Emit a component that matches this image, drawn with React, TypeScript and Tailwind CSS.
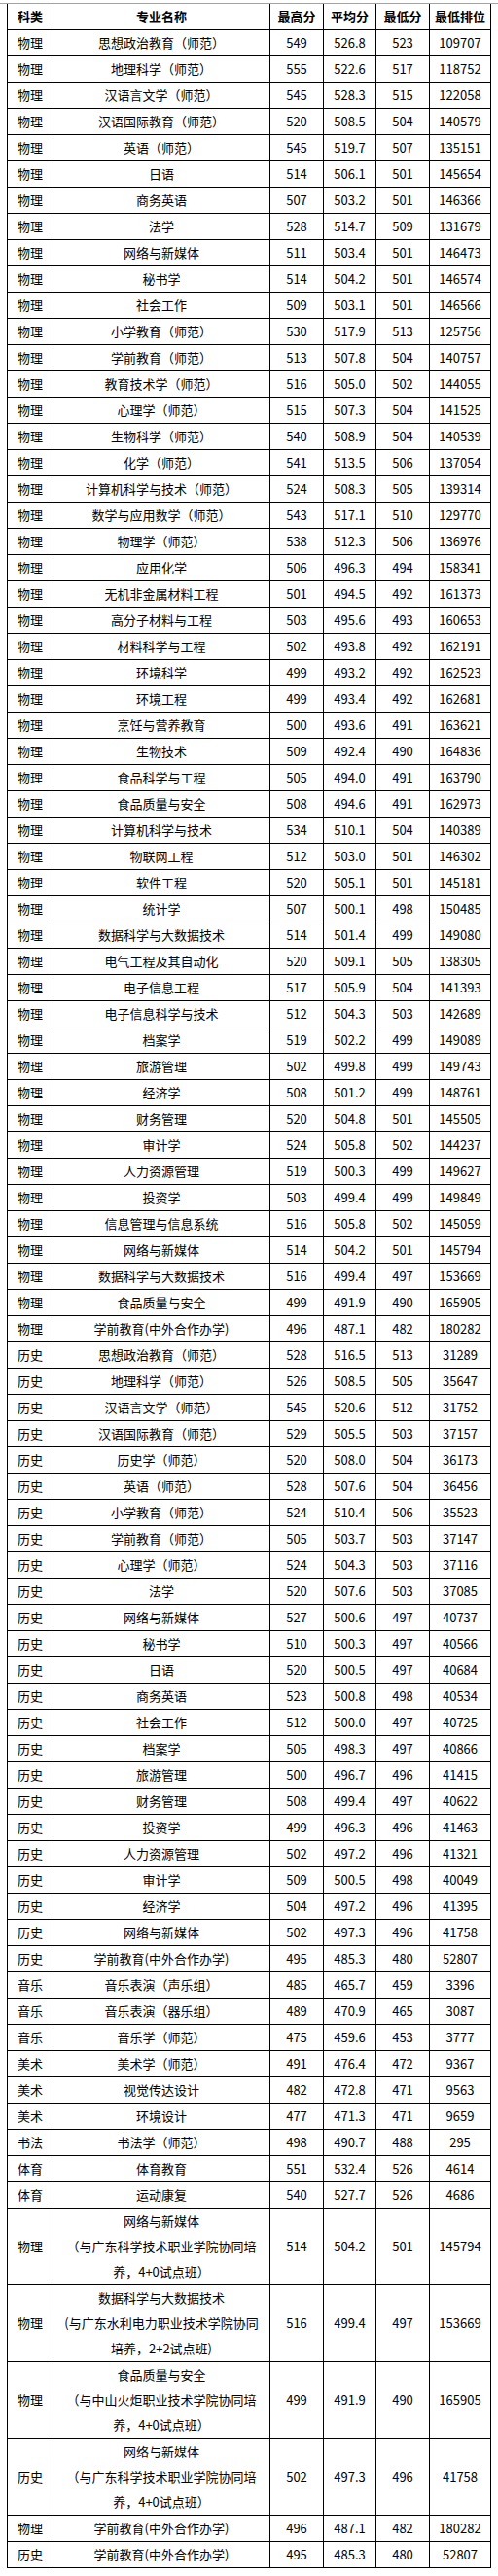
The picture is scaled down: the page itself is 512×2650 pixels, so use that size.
type Row = [string, string[], string, string, string, string];

const single = (s: string) => [s];

const physics: [string, string, string, string, string][] = [
  ["思想政治教育（师范）", "549", "526.8", "523", "109707"],
  ["地理科学（师范）", "555", "522.6", "517", "118752"],
  ["汉语言文学（师范）", "545", "528.3", "515", "122058"],
  ["汉语国际教育（师范）", "520", "508.5", "504", "140579"],
  ["英语（师范）", "545", "519.7", "507", "135151"],
  ["日语", "514", "506.1", "501", "145654"],
  ["商务英语", "507", "503.2", "501", "146366"],
  ["法学", "528", "514.7", "509", "131679"],
  ["网络与新媒体", "511", "503.4", "501", "146473"],
  ["秘书学", "514", "504.2", "501", "146574"],
  ["社会工作", "509", "503.1", "501", "146566"],
  ["小学教育（师范）", "530", "517.9", "513", "125756"],
  ["学前教育（师范）", "513", "507.8", "504", "140757"],
  ["教育技术学（师范）", "516", "505.0", "502", "144055"],
  ["心理学（师范）", "515", "507.3", "504", "141525"],
  ["生物科学（师范）", "540", "508.9", "504", "140539"],
  ["化学（师范）", "541", "513.5", "506", "137054"],
  ["计算机科学与技术（师范）", "524", "508.3", "505", "139314"],
  ["数学与应用数学（师范）", "543", "517.1", "510", "129770"],
  ["物理学（师范）", "538", "512.3", "506", "136976"],
  ["应用化学", "506", "496.3", "494", "158341"],
  ["无机非金属材料工程", "501", "494.5", "492", "161373"],
  ["高分子材料与工程", "503", "495.6", "493", "160653"],
  ["材料科学与工程", "502", "493.8", "492", "162191"],
  ["环境科学", "499", "493.2", "492", "162523"],
  ["环境工程", "499", "493.4", "492", "162681"],
  ["烹饪与营养教育", "500", "493.6", "491", "163621"],
  ["生物技术", "509", "492.4", "490", "164836"],
  ["食品科学与工程", "505", "494.0", "491", "163790"],
  ["食品质量与安全", "508", "494.6", "491", "162973"],
  ["计算机科学与技术", "534", "510.1", "504", "140389"],
  ["物联网工程", "512", "503.0", "501", "146302"],
  ["软件工程", "520", "505.1", "501", "145181"],
  ["统计学", "507", "500.1", "498", "150485"],
  ["数据科学与大数据技术", "514", "501.4", "499", "149080"],
  ["电气工程及其自动化", "520", "509.1", "505", "138305"],
  ["电子信息工程", "517", "505.9", "504", "141393"],
  ["电子信息科学与技术", "512", "504.3", "503", "142689"],
  ["档案学", "519", "502.2", "499", "149089"],
  ["旅游管理", "502", "499.8", "499", "149743"],
  ["经济学", "508", "501.2", "499", "148761"],
  ["财务管理", "520", "504.8", "501", "145505"],
  ["审计学", "524", "505.8", "502", "144237"],
  ["人力资源管理", "519", "500.3", "499", "149627"],
  ["投资学", "503", "499.4", "499", "149849"],
  ["信息管理与信息系统", "516", "505.8", "502", "145059"],
  ["网络与新媒体", "514", "504.2", "501", "145794"],
  ["数据科学与大数据技术", "516", "499.4", "497", "153669"],
  ["食品质量与安全", "499", "491.9", "490", "165905"],
  ["学前教育(中外合作办学)", "496", "487.1", "482", "180282"],
];

const history: [string, string, string, string, string][] = [
  ["思想政治教育（师范）", "528", "516.5", "513", "31289"],
  ["地理科学（师范）", "526", "508.5", "505", "35647"],
  ["汉语言文学（师范）", "545", "520.6", "512", "31752"],
  ["汉语国际教育（师范）", "529", "505.5", "503", "37157"],
  ["历史学（师范）", "520", "508.0", "504", "36173"],
  ["英语（师范）", "528", "507.6", "504", "36456"],
  ["小学教育（师范）", "524", "510.4", "506", "35523"],
  ["学前教育（师范）", "505", "503.7", "503", "37147"],
  ["心理学（师范）", "524", "504.3", "503", "37116"],
  ["法学", "520", "507.6", "503", "37085"],
  ["网络与新媒体", "527", "500.6", "497", "40737"],
  ["秘书学", "510", "500.3", "497", "40566"],
  ["日语", "520", "500.5", "497", "40684"],
  ["商务英语", "523", "500.8", "498", "40534"],
  ["社会工作", "512", "500.0", "497", "40725"],
  ["档案学", "505", "498.3", "497", "40866"],
  ["旅游管理", "500", "496.7", "496", "41415"],
  ["财务管理", "508", "499.4", "497", "40622"],
  ["投资学", "499", "496.3", "496", "41463"],
  ["人力资源管理", "502", "497.2", "496", "41321"],
  ["审计学", "509", "500.5", "498", "40049"],
  ["经济学", "504", "497.2", "496", "41395"],
  ["网络与新媒体", "502", "497.3", "496", "41758"],
  ["学前教育(中外合作办学)", "495", "485.3", "480", "52807"],
];

const rows: Row[] = [
  ...physics.map(([n, a, b, c, d]): Row => ["物理", single(n), a, b, c, d]),
  ...history.map(([n, a, b, c, d]): Row => ["历史", single(n), a, b, c, d]),
  ["音乐", single("音乐表演（声乐组）"), "485", "465.7", "459", "3396"],
  ["音乐", single("音乐表演（器乐组）"), "489", "470.9", "465", "3087"],
  ["音乐", single("音乐学（师范）"), "475", "459.6", "453", "3777"],
  ["美术", single("美术学（师范）"), "491", "476.4", "472", "9367"],
  ["美术", single("视觉传达设计"), "482", "472.8", "471", "9563"],
  ["美术", single("环境设计"), "477", "471.3", "471", "9659"],
  ["书法", single("书法学（师范）"), "498", "490.7", "488", "295"],
  ["体育", single("体育教育"), "551", "532.4", "526", "4614"],
  ["体育", single("运动康复"), "540", "527.7", "526", "4686"],
  ["物理", ["网络与新媒体", "（与广东科学技术职业学院协同培", "养，4+0试点班）"], "514", "504.2", "501", "145794"],
  ["物理", ["数据科学与大数据技术", "(与广东水利电力职业技术学院协同", "培养，2+2试点班)"], "516", "499.4", "497", "153669"],
  ["物理", ["食品质量与安全", "（与中山火炬职业技术学院协同培", "养，4+0试点班）"], "499", "491.9", "490", "165905"],
  ["历史", ["网络与新媒体", "（与广东科学技术职业学院协同培", "养，4+0试点班）"], "502", "497.3", "496", "41758"],
  ["物理", single("学前教育(中外合作办学)"), "496", "487.1", "482", "180282"],
  ["历史", single("学前教育(中外合作办学)"), "495", "485.3", "480", "52807"],
];

const headers = ["科类", "专业名称", "最高分", "平均分", "最低分", "最低排位"];

export default function App() {
  return (
    <div className="min-h-[2650px] w-[512px] bg-white pt-[3px] text-black [font-family:'Noto_Sans_CJK_SC',sans-serif]">
      <div className="border-t border-[#a3a3a3]">
        <table className="ml-[7px] w-[497px] table-fixed border-collapse text-[13px] leading-[26px]">
          <colgroup>
            <col className="w-[47px]" />
            <col className="w-[223px]" />
            <col className="w-[55px]" />
            <col className="w-[54px]" />
            <col className="w-[55px]" />
            <col className="w-[63px]" />
          </colgroup>
          <thead>
            <tr>
              {headers.map((h) => (
                <th key={h} className="border border-t-0 border-black p-0 text-center font-bold">
                  {h}
                </th>
              ))}
            </tr>
          </thead>
          <tbody>
            {rows.map(([kind, name, max, avg, min, rank], i) => (
              <tr key={i}>
                <td className="border border-black p-0 text-center">{kind}</td>
                <td className="whitespace-nowrap border border-black p-0 text-center">
                  {name.map((line, j) => (
                    <div key={j}>{line}</div>
                  ))}
                </td>
                <td className="border border-black p-0 text-center">{max}</td>
                <td className="border border-black p-0 text-center">{avg}</td>
                <td className="border border-black p-0 text-center">{min}</td>
                <td className="border border-black p-0 text-center">{rank}</td>
              </tr>
            ))}
          </tbody>
        </table>
      </div>
    </div>
  );
}
